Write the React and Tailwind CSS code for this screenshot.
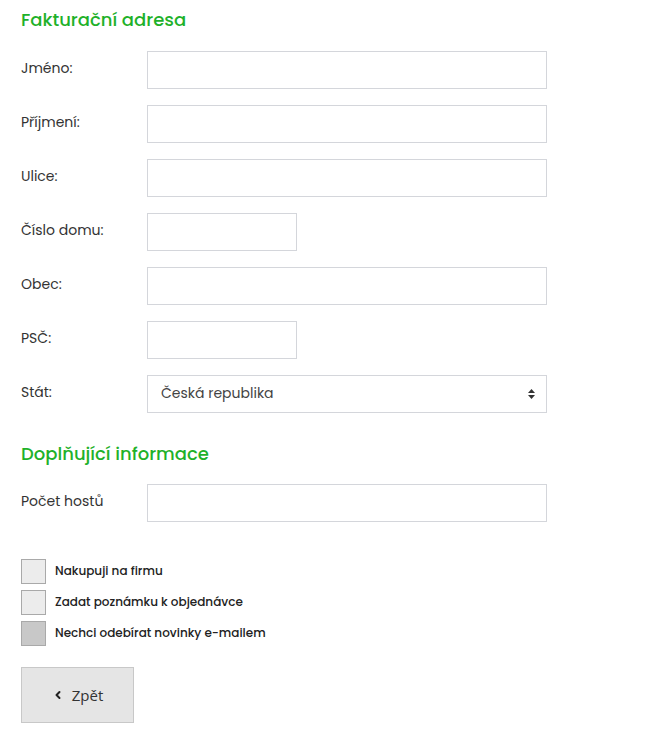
import { ChevronLeft } from "lucide-react";

const font = { fontFamily: "Poppins, 'Open Sans', 'Liberation Sans', sans-serif" };

function Row({ label, small, children }) {
  return (
    <div className="flex items-center h-[38px] mb-4">
      <label className="w-[126px] text-[14px] text-[#333] -mt-1">{label}</label>
      {children || (
        <input
          type="text"
          className={`${small ? "w-[150px]" : "w-[400px]"} h-[38px] border border-[#d4d6db] bg-white outline-none`}
        />
      )}
    </div>
  );
}

function Check({ label, dark }) {
  return (
    <div className="flex items-center h-[25px] mb-[6px]">
      <span
        className={`w-[25px] h-[25px] border border-[#a9a9a9] ${dark ? "bg-[#c8c8c8]" : "bg-[#ececec]"}`}
      />
      <span className="ml-[9px] text-[12px] font-medium text-[#222] -mt-[1px]">{label}</span>
    </div>
  );
}

export default function App() {
  return (
    <div className="bg-white min-h-screen px-[21px] pt-[7px]" style={font}>
      <h2 className="text-[18px] font-medium text-[#1fb12a] leading-[26px] mb-[18px]">Fakturační adresa</h2>
      <Row label="Jméno:" />
      <Row label="Příjmení:" />
      <Row label="Ulice:" />
      <Row label="Číslo domu:" small />
      <Row label="Obec:" />
      <Row label="PSČ:" small />
      <Row label="Stát:">
        <div className="w-[400px] h-[38px] border border-[#d4d6db] bg-white flex items-center justify-between pl-[13px] pr-[10px]">
          <span className="text-[14px] text-[#444] -mt-[2px]">Česká republika</span>
          <svg width="9" height="12" viewBox="0 0 9 12">
            <path d="M4.5 1 L8 5 H1 Z" fill="#333" />
            <path d="M4.5 11 L8 7 H1 Z" fill="#333" />
          </svg>
        </div>
      </Row>
      <h2 className="text-[18px] font-medium text-[#1fb12a] leading-[26px] mt-[28px] mb-[17px]">Doplňující informace</h2>
      <Row label="Počet hostů" />
      <div className="mt-[37px]">
        <Check label="Nakupuji na firmu" />
        <Check label="Zadat poznámku k objednávce" />
        <Check label="Nechci odebírat novinky e-mailem" dark />
      </div>
      <button className="mt-[21px] w-[113px] h-[56px] bg-[#e5e5e5] border border-[#c8c8c8] flex items-center justify-center gap-[8px] text-[15px] text-[#333]">
        <ChevronLeft size={12} strokeWidth={4} className="text-[#222]" />
        <span style={{ fontFamily: "'Open Sans', sans-serif" }}>Zpět</span>
      </button>
    </div>
  );
}
